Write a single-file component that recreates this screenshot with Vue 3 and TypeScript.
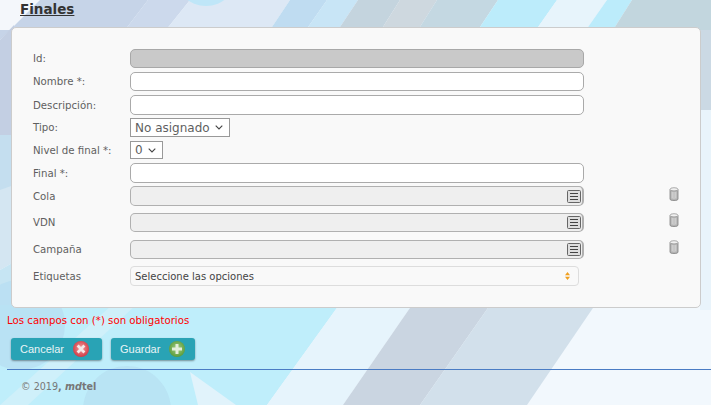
<script setup lang="ts">
interface Row {
  label: string
  kind: 'text' | 'disabled' | 'lookup' | 'select' | 'multi'
  height: number
  gap: number
  options?: string[]
}

const rows: Row[] = [
  { label: 'Id:', kind: 'disabled', height: 19, gap: 4 },
  { label: 'Nombre *:', kind: 'text', height: 19, gap: 4 },
  { label: 'Descripción:', kind: 'text', height: 20, gap: 3 },
  { label: 'Tipo:', kind: 'select', height: 19, gap: 4, options: ['No asignado'] },
  { label: 'Nivel de final *:', kind: 'select', height: 18, gap: 4, options: ['0'] },
  { label: 'Final *:', kind: 'text', height: 20, gap: 3 },
  { label: 'Cola', kind: 'lookup', height: 20, gap: 7 },
  { label: 'VDN', kind: 'lookup', height: 19, gap: 8 },
  { label: 'Campaña', kind: 'lookup', height: 19, gap: 7 },
  { label: 'Etiquetas', kind: 'multi', height: 20, gap: 0 }
]

const stripes: { points: string; fill: string }[] = [
  { points: '0,0 711,0 711,405 0,405', fill: '#f2f8fd' },
  // top band
  { points: '0,0 40,0 0,40', fill: '#f4f7fb' },
  { points: '40,0 148,0 125,30 0,30 0,40', fill: '#c6d4e8' },
  { points: '148,0 190,0 166,30 125,30', fill: '#ccd9ec' },
  { points: '190,0 290,0 270,30 166,30', fill: '#dde8f5' },
  { points: '290,0 327,0 306,30 270,30', fill: '#bfdcf1' },
  { points: '327,0 358,0 338,30 306,30', fill: '#c8e5f6' },
  { points: '358,0 400,0 381,30 338,30', fill: '#c4d4de' },
  { points: '400,0 437,0 418,30 381,30', fill: '#ced8df' },
  { points: '437,0 498,0 478,30 418,30', fill: '#c4d8e2' },
  { points: '498,0 557,0 536,30 478,30', fill: '#bcecfb' },
  { points: '557,0 607,0 586,30 536,30', fill: '#e7f4fb' },
  { points: '607,0 632,0 613,30 586,30', fill: '#bcecfb' },
  { points: '632,0 711,0 711,30 613,30', fill: '#c2d6de' },
  // left edge
  { points: '0,40 14,25 14,135 0,135', fill: '#c3cfe3' },
  { points: '0,135 14,135 14,190 0,190', fill: '#c4deef' },
  { points: '0,190 14,185 14,262 0,270', fill: '#d4e6f2' },
  { points: '0,270 14,262 14,310 0,310', fill: '#c6e5f3' },
  // right edge
  { points: '700,30 711,30 711,110 700,110', fill: '#cbd9e4' },
  { points: '700,110 711,110 711,310 700,310', fill: '#e9f4fb' },
  // bottom band
  { points: '0,305 339,305 267,405 0,405', fill: '#bfeefb' },
  { points: '339,305 412,305 343,405 267,405', fill: '#e6f4fc' },
  { points: '412,305 490,305 420,405 343,405', fill: '#cad5e1' },
  { points: '490,305 595,305 527,405 420,405', fill: '#d2e0eb' },
  // soft shapes in the lower left
  { points: '112,305 136,305 28,405 0,405', fill: '#cff0fa' },
  { points: '190,372 236,405 198,405', fill: '#e1f3fb' }
]
</script>

<template>
  <div class="page">
    <svg class="backdrop" viewBox="0 0 711 405" width="711" height="405" aria-hidden="true">
      <polygon v-for="s in stripes" :key="s.points" :points="s.points" :fill="s.fill" />
      <circle cx="206" cy="-25" r="31" fill="#bfe6f8" />
      <circle cx="20" cy="325" r="45" fill="#b8dff2" opacity="0.8" />
      <circle cx="127" cy="410" r="44" fill="#b8e2f3" opacity="0.9" />
    </svg>

    <main class="content">
      <h1 class="title">Finales</h1>

      <form class="card" @submit.prevent>
        <div
          v-for="row in rows"
          :key="row.label"
          class="row"
          :style="{ height: row.height + 'px', marginBottom: row.gap + 'px' }"
        >
          <label class="label">{{ row.label }}</label>

          <div class="field">
            <input v-if="row.kind === 'text'" class="input" type="text" />
            <input v-else-if="row.kind === 'disabled'" class="input input--id" type="text" disabled />
            <div v-else-if="row.kind === 'lookup'" class="input input--lookup">
              <svg class="list-icon" viewBox="0 0 14 13" width="14" height="13" aria-hidden="true">
                <rect x="0.5" y="0.5" width="13" height="12" rx="1" fill="#dedede" stroke="#666" />
                <path d="M3 3.5h8M3 6.5h8M3 9.5h8" stroke="#444" stroke-width="1.2" fill="none" />
              </svg>
            </div>
            <select v-else-if="row.kind === 'select'" class="select">
              <option v-for="o in row.options" :key="o">{{ o }}</option>
            </select>
            <div v-else class="multi">
              <span>Seleccione las opciones</span>
              <svg class="carets" viewBox="0 0 5 8" width="5" height="8" aria-hidden="true">
                <path d="M2.5 0 5 3.2H0zM2.5 8 0 4.8h5z" fill="#f0a020" />
              </svg>
            </div>
          </div>

          <svg v-if="row.kind === 'lookup'" class="trash" viewBox="0 0 10 14" width="10" height="14" aria-hidden="true">
            <path d="M1 2.5v9.5c0 1 1.5 1.5 4 1.5s4-.5 4-1.5V2.5z" fill="#b5b5b5" stroke="#808080" stroke-width="0.8" />
            <ellipse cx="5" cy="2.3" rx="4" ry="1.6" fill="#f0f0f0" stroke="#999" stroke-width="0.8" />
            <path d="M3.2 5v6.5M5 5v7M6.8 5v6.5" stroke="#e0e0e0" stroke-width="0.8" fill="none" />
          </svg>
        </div>
      </form>

      <p class="note">Los campos con (*) son obligatorios</p>

      <div class="actions">
        <button type="button" class="btn btn--cancel">
          Cancelar
          <svg viewBox="0 0 16 16" width="16" height="16" aria-hidden="true">
            <defs>
              <radialGradient id="red" cx="50%" cy="45%" r="55%">
                <stop offset="0" stop-color="#f4a0a0" />
                <stop offset="1" stop-color="#d03a44" />
              </radialGradient>
            </defs>
            <circle cx="8" cy="8" r="8" fill="url(#red)" />
            <path d="M4.6 4.6l6.8 6.8M11.4 4.6l-6.8 6.8" stroke="#f4e8e8" stroke-width="2.8" />
          </svg>
        </button>
        <button type="button" class="btn btn--save">
          Guardar
          <svg viewBox="0 0 16 16" width="16" height="16" aria-hidden="true">
            <defs>
              <radialGradient id="green" cx="50%" cy="45%" r="55%">
                <stop offset="0" stop-color="#a6d08a" />
                <stop offset="1" stop-color="#5a9c3a" />
              </radialGradient>
            </defs>
            <circle cx="8" cy="8" r="8" fill="url(#green)" />
            <path d="M8 3v10M3 8h10" stroke="#e4efdc" stroke-width="3" />
          </svg>
        </button>
      </div>

      <footer class="footer">© 2019<b>, <i>md</i>tel</b></footer>
    </main>
  </div>
</template>

<style scoped>
.page {
  position: relative;
  width: 711px;
  height: 405px;
  overflow: hidden;
  font-family: "DejaVu Sans", sans-serif;
  font-size: 10.2px;
  color: #5f5f5f;
}
.backdrop {
  position: absolute;
  inset: 0;
}
.content {
  position: relative;
  display: flex;
  flex-direction: column;
  height: 100%;
  box-sizing: border-box;
}
.title {
  margin: 0 0 0 20px;
  height: 27px;
  font-size: 13.5px;
  line-height: 19px;
  font-weight: 700;
  color: #333;
  text-decoration: underline;
}
.card {
  box-sizing: border-box;
  width: 690px;
  height: 281px;
  margin-left: 11px;
  padding: 21px 0 0 21px;
  background: #f9f9f9;
  border: 1px solid #ccc;
  border-radius: 5px;
}
.row {
  display: flex;
  align-items: center;
}
.label {
  flex: 0 0 97px;
  line-height: 13px;
  color: #5f5f5f;
}
.field {
  flex: 0 0 454px;
  height: 100%;
}
.input {
  display: block;
  box-sizing: border-box;
  width: 100%;
  height: 100%;
  margin: 0;
  padding: 0;
  background: #fff;
  border: 1px solid #aaa;
  border-radius: 5px;
}
.input--id {
  background: #c9c9c9;
  border-color: #a8a8a8;
}
.input--lookup {
  display: flex;
  align-items: center;
  justify-content: flex-end;
  padding-right: 1px;
  background: #efefef;
  border-color: #b0b0b0;
  border-right: 2px solid #b0b0b0;
}
.list-icon {
  display: block;
}
.select {
  display: block;
  height: 100%;
  min-width: 33px;
  padding: 0 19px 0 4px;
  font-family: "DejaVu Sans", sans-serif;
  font-size: 12px;
  color: #5f5f5f;
  appearance: none;
  background: #fff url("data:image/svg+xml,%3Csvg xmlns='http://www.w3.org/2000/svg' width='8' height='5'%3E%3Cpath d='M.7.7 4 4 7.3.7' fill='none' stroke='%23444' stroke-width='1.1'/%3E%3C/svg%3E") no-repeat right 6px center;
  border: 1px solid #999;
  border-radius: 0;
}
.multi {
  display: flex;
  box-sizing: border-box;
  align-items: center;
  justify-content: space-between;
  width: 449px;
  height: 100%;
  padding: 0 8px 0 4px;
  font-size: 10px;
  color: #444;
  background: #f9f9f9;
  border: 1px solid #ddd;
  border-radius: 4px;
}
.carets {
  display: block;
}
.trash {
  margin-left: 85px;
  margin-top: -5px;
}
.note {
  margin: 6px 0 0 7px;
  height: 13px;
  line-height: 13px;
  color: #f00;
}
.actions {
  display: flex;
  gap: 9px;
  margin: 11px 0 0 11px;
}
.btn {
  display: flex;
  align-items: center;
  justify-content: space-between;
  box-sizing: border-box;
  height: 22px;
  padding: 0 13px 0 9px;
  font-family: "Liberation Sans", sans-serif;
  font-size: 11px;
  color: #e8f4f6;
  background: #29a3b5;
  border: 0;
  border-radius: 3px;
  box-shadow: 0 1px 2px rgba(0, 0, 0, 0.4);
}
.btn--cancel {
  width: 91px;
}
.btn--save {
  width: 84px;
  padding-right: 10px;
}
.footer {
  margin: 9px 0 0 7px;
  padding: 10px 0 0 14px;
  font-size: 9.6px;
  line-height: 14px;
  color: #777;
  border-top: 1px solid #4a7cc4;
}
.footer b {
  font-weight: 700;
}
</style>
